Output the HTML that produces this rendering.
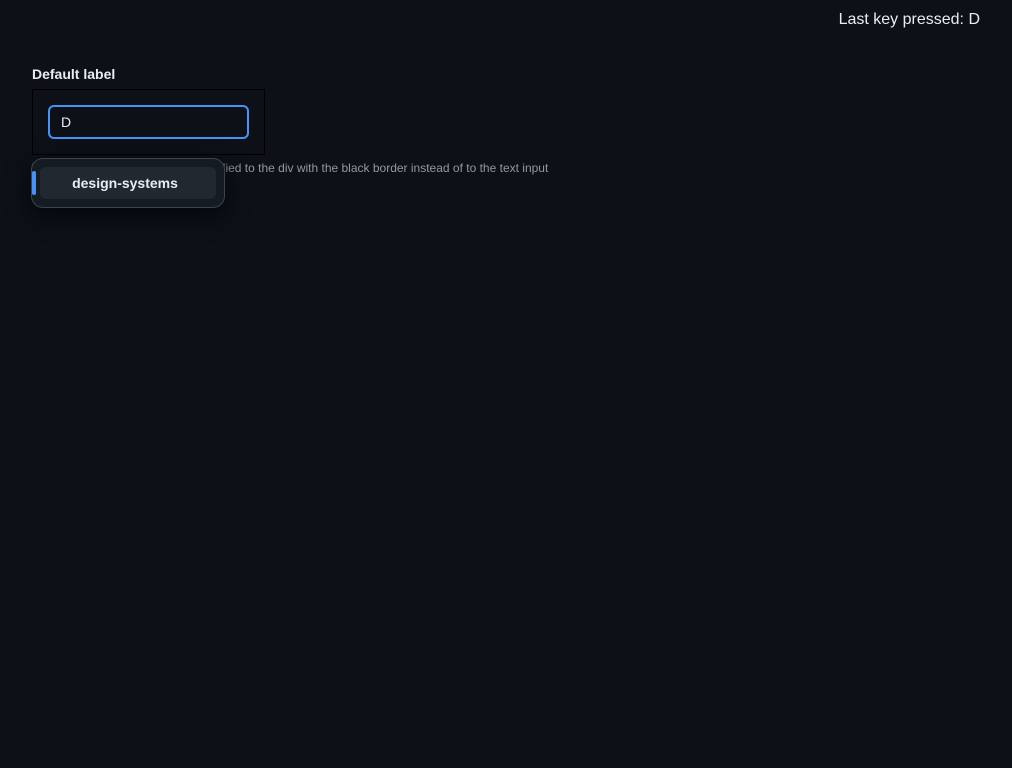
<!DOCTYPE html>
<html><head><style>
body{margin:0;background:#0d1117;width:1012px;height:768px;position:relative;font-family:"Liberation Sans",sans-serif;overflow:hidden}
.k{position:absolute;right:32px;top:11px;color:#e6edf3;font-size:16px}
.l{position:absolute;left:32px;top:66px;color:#e6edf3;font-size:14px;font-weight:bold}
.box{position:absolute;left:32px;top:89px;width:231px;height:64px;border:1px solid #000;background:#0d1117}
.in{position:absolute;left:48px;top:105px;width:197px;height:30px;border:2px solid #4493f8;border-radius:6px;background:#0d1117;color:#e6edf3;font-size:14px;line-height:30px;box-sizing:content-box}
.in span{margin-left:11px}
.cap{position:absolute;left:32px;top:161px;color:#9198a1;font-size:12px;white-space:nowrap}
.dd{position:absolute;left:31px;top:158px;width:192px;height:48px;border:1px solid #3d444d;border-radius:12px;background:#151b23;box-shadow:0 8px 24px rgba(1,4,9,.8)}
.it{position:absolute;left:8px;top:8px;width:176px;height:32px;border-radius:6px;background:#212830;color:#e6edf3;font-size:14px;font-weight:bold;text-align:center;line-height:32px;text-indent:-6px}
.bar{position:absolute;left:0;top:12px;width:4px;height:24px;border-radius:2px;background:#4493f8}
</style></head><body>
<div class="k">Last key pressed: D</div>
<div class="l">Default label</div>
<div class="box"></div>
<div class="in"><span>D</span></div>
<div class="cap">The anchor ref is being wrongly applied to the div with the black border instead of to the text input</div>
<div class="dd"><div class="bar"></div><div class="it">design-systems</div></div>
</body></html>
